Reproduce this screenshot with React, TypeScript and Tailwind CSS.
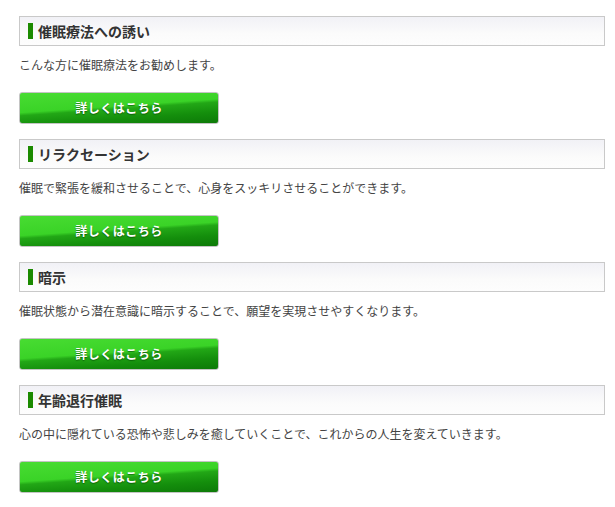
const sections = [
  { title: "催眠療法への誘い", text: "こんな方に催眠療法をお勧めします。" },
  { title: "リラクセーション", text: "催眠で緊張を緩和させることで、心身をスッキリさせることができます。" },
  { title: "暗示", text: "催眠状態から潜在意識に暗示することで、願望を実現させやすくなります。" },
  { title: "年齢退行催眠", text: "心の中に隠れている恐怖や悲しみを癒していくことで、これからの人生を変えていきます。" },
];

const App = () => {
  return (
    <div className="min-h-screen bg-white pt-4 pl-[19px] font-['Noto_Sans_CJK_JP','Noto_Sans',sans-serif]">
      <div className="w-[586px]">
        {sections.map((s) => (
          <section key={s.title} className="mb-[15px]">
            {/* 見出し */}
            <h2 className="flex items-center h-[30px] border border-[#c9c9c9] bg-[linear-gradient(#f1f1f6,#fbfbfb_60%,#fdfdfd)] pl-2">
              <span className="block w-[5px] h-4 bg-[#1b8a00] mr-[5px]"></span>
              <span className="text-[14px] font-bold text-[#333] leading-none">{s.title}</span>
            </h2>

            <p className="mt-[10px] text-[12px] leading-[18px] text-[#444]">{s.text}</p>

            {/* ボタン */}
            <a
              href="#"
              className="mt-[18px] flex items-center justify-center w-[200px] h-8 rounded-[3px] border border-[#c4c4c4] bg-[linear-gradient(176deg,#48dc32_0%,#3ad327_45%,#22a716_52%,#148e0c_75%,#0d7a08_100%)] text-white text-[12px] font-bold tracking-[0.5px] [text-shadow:0_1px_1px_rgba(0,60,0,0.6)]"
            >
              詳しくはこちら
            </a>
          </section>
        ))}
      </div>
    </div>
  );
};

export default App;
